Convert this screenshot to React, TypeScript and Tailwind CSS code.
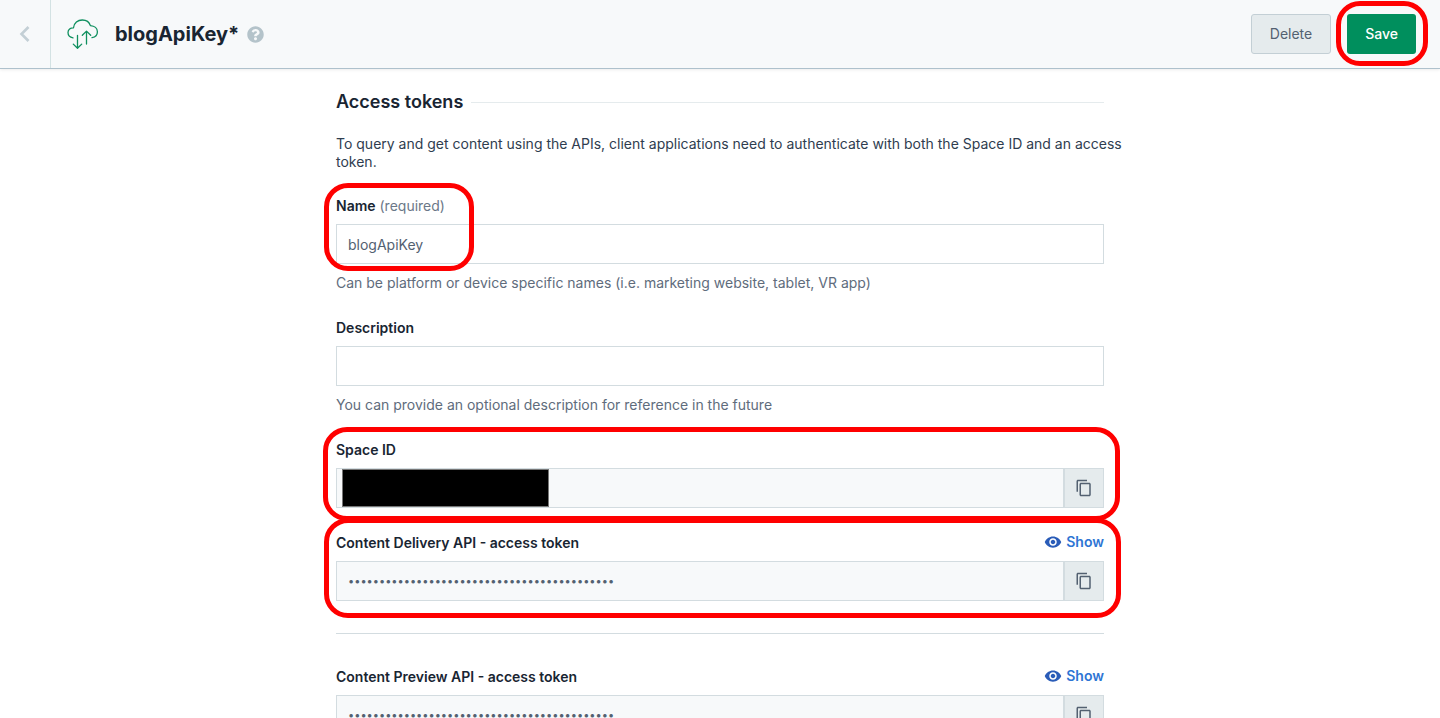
import React from 'react';
import { FaQuestionCircle } from 'react-icons/fa';
import { MdContentCopy, MdVisibility } from 'react-icons/md';

const TOKEN = 'x'.repeat(43);

function CloudIcon() {
  return (
    <svg width="32" height="32" viewBox="0 0 32 32" fill="none" stroke="#0e8f5e" strokeWidth="1.3" strokeLinecap="round" strokeLinejoin="round" aria-hidden="true">
      <path d="M6 19.8C2.8 19.4 1 17.2 1 14.6C1 11.6 3.5 9.6 6.5 9.8C7 5 10.8 2 15.3 2C19.3 2 22.3 4 23.4 7.6C27.6 7.9 30.4 10.4 30.4 13.8C30.4 16.8 28.2 19.2 25 19.7" />
      <path d="M10.5 17.3V30M6.3 26.1L10.5 30.2L14.7 26.1" />
      <path d="M19.5 26V13.2M15.3 17.3L19.5 13.1L23.7 17.3" />
    </svg>
  );
}

// Red outline drawn around the parts to look at
function Highlight({ className }: { className: string }) {
  return <div className={`absolute pointer-events-none border-[5px] border-[#ff0000] rounded-3xl z-10 ${className}`} />;
}

function CopyButton({ label }: { label: string }) {
  return (
    <button type="button" aria-label={label} className="w-10 h-10 shrink-0 flex items-center justify-center bg-[#e5ebed] border border-[#d3dce0] text-[#536171]">
      <MdContentCopy className="w-[18px] h-[18px]" />
    </button>
  );
}

function TokenField({ id, label }: { id: string; label: string }) {
  return (
    <>
      <div className="flex items-start justify-between mb-2">
        <label htmlFor={id} className="font-semibold text-[#192532]">{label}</label>
        <button type="button" className="flex items-center gap-1 leading-[18px] font-semibold text-[#2e75d4]">
          <MdVisibility className="w-[18px] h-[18px] text-[#2a5cb8]" />
          Show
        </button>
      </div>
      <div className="flex">
        <input id={id} type="password" readOnly defaultValue={TOKEN} className="flex-1 min-w-0 h-10 px-[11px] bg-[#f7f9fa] border border-[#d3dce0] text-[11px] text-[#536171] outline-none" />
        <CopyButton label={`Copy ${label}`} />
      </div>
    </>
  );
}

export default function App() {
  return (
    <div className="h-screen flex flex-col bg-white font-['Inter',sans-serif] text-sm leading-5 text-[#2a3039]">
      <header className="relative z-20 shrink-0 flex items-stretch h-[69px] bg-[#f7f9fa] border-b border-[#aec1cc] shadow-[0_1px_3px_rgba(0,0,0,0.08)]">
        <button type="button" aria-label="Back" className="w-[51px] flex items-center justify-center border-r border-[#d3e2e3]">
          <svg width="12" height="16" viewBox="0 0 12 16" fill="none" stroke="#c3cfd5" strokeWidth="2.6" aria-hidden="true">
            <path d="M9.5 1L2.5 8L9.5 15" />
          </svg>
        </button>
        <div className="flex-1 flex items-center pl-4">
          <CloudIcon />
          <h1 className="ml-4 text-xl font-bold text-[#192532]">blogApiKey*</h1>
          <button type="button" aria-label="Help" className="ml-2 text-[#b4c3ca]">
            <FaQuestionCircle className="w-[17px] h-[17px]" />
          </button>
        </div>
        <div className="flex items-center gap-4 pr-6">
          <button type="button" className="h-10 px-[18px] rounded-[3px] bg-[#e5ebed] border border-[#c3cfd5] text-[#536171]">Delete</button>
          <div className="relative">
            <button type="button" className="h-10 px-[18px] rounded-[3px] bg-[#008f5d] text-white font-medium">Save</button>
            <Highlight className="-top-[13px] -bottom-3 -left-[11px] -right-3" />
          </div>
        </div>
      </header>

      <main className="flex-1 min-h-0 overflow-y-auto [scrollbar-width:none] px-6">
        <form className="max-w-3xl mx-auto pt-[21px] pb-10">
          <div className="flex items-center gap-2">
            <h2 className="text-lg leading-6 font-semibold text-[#192532]">Access tokens</h2>
            <div className="flex-1 h-px bg-[#e5ebed]" />
          </div>
          <p className="mt-[21px] -mr-5 leading-[18px] text-[#2f3d4f]">
            To query and get content using the APIs, client applications need to authenticate with both the Space ID and an access token.
          </p>

          <div className="relative mt-[25px]">
            <label htmlFor="name" className="block mb-2 text-[#6b7888]">
              <span className="font-semibold text-[#192532]">Name</span> (required)
            </label>
            <input id="name" type="text" defaultValue="blogApiKey" className="block w-full h-10 px-[11px] bg-white border border-[#d3dce0] text-[#536171] outline-none" />
            <Highlight className="-top-[13px] h-[88px] -left-3 w-[150px]" />
            <p className="mt-[9px] text-[#606c7c]">Can be platform or device specific names (i.e. marketing website, tablet, VR app)</p>
          </div>

          <div className="mt-[25px]">
            <label htmlFor="description" className="block mb-2 font-semibold text-[#192532]">Description</label>
            <input id="description" type="text" className="block w-full h-10 px-[11px] bg-white border border-[#d3dce0] text-[#536171] outline-none" />
            <p className="mt-[9px] text-[#606c7c]">You can provide an optional description for reference in the future</p>
          </div>

          <div className="relative mt-[25px]">
            <label htmlFor="space-id" className="block mb-2 font-semibold text-[#192532]">Space ID</label>
            <div className="relative flex">
              <input id="space-id" type="text" readOnly className="flex-1 min-w-0 h-10 px-[11px] bg-[#f7f9fa] border border-[#d3dce0] outline-none" />
              <div className="absolute left-[6px] inset-y-px w-[207px] bg-black border border-[#777777]" />
              <CopyButton label="Copy Space ID" />
            </div>
            <Highlight className="-top-[13px] -bottom-[13px] -left-[13px] -right-4" />
          </div>

          <div className="relative mt-[25px]">
            <TokenField id="delivery-token" label="Content Delivery API - access token" />
            <Highlight className="-top-[15px] -bottom-[17px] -left-3 -right-[17px]" />
          </div>

          <hr className="mt-8 mb-[33px] border-[#d3dce0]" />

          <TokenField id="preview-token" label="Content Preview API - access token" />
        </form>
      </main>
    </div>
  );
}
